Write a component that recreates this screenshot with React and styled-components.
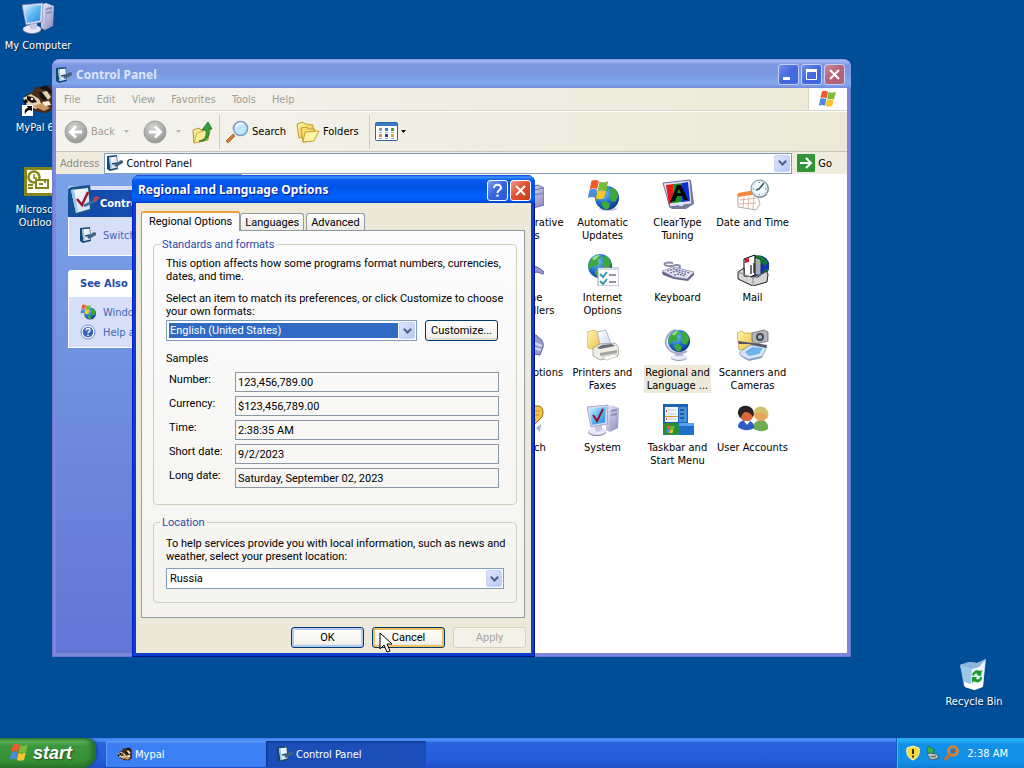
import React, { useState } from 'react';
import styled, { createGlobalStyle, css } from 'styled-components';

const GlobalStyle = createGlobalStyle`
    * {
        box-sizing: border-box;
    }

    body {
        margin: 0;
        overflow: hidden;
        font-family: 'DejaVu Sans Condensed', Roboto, sans-serif;
        font-size: 11px;
        line-height: 13px;
        color: #000;
    }

    button, input, select {
        font: inherit;
        color: inherit;
        margin: 0;
    }

    svg {
        display: block;
        flex: none;
    }
`;

/* ---------- desktop ---------- */

const Screen = styled.div`
    min-height: 100vh;
    display: grid;
    grid-template-rows: 1fr auto;
    background: #004e98;
`;

const Desktop = styled.main`
    position: relative;
    padding: 2px 0;
`;

const ShortcutList = styled.div`
    display: flex;
    flex-direction: column;
    align-items: flex-start;
    gap: 12px;
`;

const Shortcut = styled.button`
    display: flex;
    flex-direction: column;
    align-items: center;
    gap: 5px;
    width: 76px;
    min-height: 70px;
    padding: 0;
    border: 0;
    background: none;
    color: #fff;
    text-shadow: 1px 1px 1px #00264d;
`;

const BinSlot = styled.div`
    position: absolute;
    right: 12px;
    bottom: 10px;
`;

/* ---------- window chrome ---------- */

const Window = styled.section`
    display: flex;
    flex-direction: column;
    position: absolute;
    border-radius: 8px 8px 0 0;
    padding: 0 4px 4px;
    background: ${props => props.$active ? '#0a3fd0' : '#7b88dc'};
    box-shadow: inset 1px 0 ${props => props.$active ? '#0019cf' : '#6a76cf'},
        inset -1px -1px ${props => props.$active ? '#00138c' : '#6a76cf'};
`;

const ExplorerWindow = styled(Window)`
    left: 52px;
    right: 173px;
    top: 59px;
    bottom: 81px;
`;

const DialogWindow = styled(Window)`
    left: 132px;
    top: 175px;
    width: 403px;
`;

const TitleBar = styled.header`
    display: flex;
    align-items: center;
    gap: 2px;
    height: ${props => props.$active ? '28px' : '29px'};
    margin: 0 -4px;
    padding: 2px ${props => props.$active ? '4px' : '6px'} 0 4px;
    border-radius: 8px 8px 0 0;
    background: ${props => props.$active
        ? 'linear-gradient(#0a3ccb 0, #3d95ff 2px, #0a5bf0 5px, #0053e5 12px, #0062ff 22px, #0055ea 26px, #003dc8 28px)'
        : 'linear-gradient(#8a97e6 0, #a7b6f4 2px, #7b97e0 6px, #7a97df 14px, #82a9ee 24px, #7b9ae4 27px, #7a88d9 29px)'};
`;

const Title = styled.h1`
    flex: 1;
    margin: 0 2px;
    font-family: 'Noto Sans', 'Open Sans', sans-serif;
    font-size: 12px;
    line-height: 16px;
    font-weight: 700;
    color: ${props => props.$active ? '#fff' : '#dbe4fb'};
    text-shadow: ${props => props.$active ? '1px 1px #0a1883' : 'none'};
`;

const captionColors = {
    blue: 'linear-gradient(135deg, #7f9ff0, #3563dc 50%, #2c58d4)',
    dim: 'linear-gradient(135deg, #6f90e8, #4468de 50%, #3f68e6)',
    red: 'linear-gradient(135deg, #f0a08a, #df5433 45%, #c23a16)',
    dimRed: 'linear-gradient(135deg, #c88a9c, #b5637a 50%, #ad5f72)',
};

const CaptionButton = styled.button`
    display: grid;
    place-items: center;
    width: 21px;
    height: 21px;
    padding: 0;
    border: 1px solid ${props => props.$tone.startsWith('dim') ? '#c5d0f5' : '#fff'};
    border-radius: 3px;
    background: ${props => captionColors[props.$tone]};
`;

/* ---------- explorer ---------- */

const MenuBar = styled.nav`
    display: flex;
    justify-content: space-between;
    height: 23px;
    border-bottom: 1px solid #d8d4c4;
    background: linear-gradient(90deg, #f4f3ee, #ece9d8);
`;

const MenuItems = styled.div`
    display: flex;
    align-items: center;
    gap: 16px;
    padding-left: 8px;
`;

const MenuButton = styled.button`
    padding: 0;
    border: 0;
    background: none;
    color: #a19e92;
`;

const Throbber = styled.div`
    display: grid;
    place-items: center;
    width: 39px;
    background: #fff;
    border-left: 1px solid #d8d4c4;
`;

const ToolBar = styled.div`
    display: flex;
    align-items: center;
    gap: 5px;
    height: 41px;
    padding: 0 8px;
    border-top: 1px solid #fff;
    border-bottom: 1px solid #cbc7b8;
    background: linear-gradient(90deg, #f4f3ee, #ece9d8);
`;

const ToolButton = styled.button`
    display: flex;
    align-items: center;
    gap: 3px;
    margin-right: ${props => props.$spaced ? '5px' : '0'};
    padding: 0;
    border: 0;
    background: none;
    color: #000;
`;

const NavButton = styled(ToolButton)`
    gap: 9px;
    margin-right: ${props => props.$last ? '4px' : '9px'};
`;

const NavFace = styled.span`
    display: flex;
    align-items: center;
    gap: 3px;
    color: #a19e92;
`;

const Separator = styled.span`
    width: 1px;
    height: 34px;
    background: #cfcbbb;
`;

const AddressBar = styled.div`
    display: flex;
    align-items: center;
    gap: 5px;
    height: 22px;
    padding: 0 15px 0 4px;
    color: #8d8a7e;
    background: #efecdf;
`;

const AddressBox = styled.div`
    flex: 1;
    display: flex;
    align-items: center;
    gap: 3px;
    height: 21px;
    padding: 0 1px 0 2px;
    border: 1px solid #7f9db9;
    background: #fff;
`;

const AddressInput = styled.input`
    flex: 1;
    min-width: 0;
    padding: 0;
    border: 0;
    outline: 0;
    background: none;
    color: #000;
`;

const ExplorerBody = styled.div`
    flex: 1;
    display: flex;
    min-height: 0;
    overflow: hidden;
    background: #fff;
`;

const Sidebar = styled.aside`
    display: flex;
    flex-direction: column;
    gap: 14px;
    width: 186px;
    padding: 12px;
    background: linear-gradient(#7ba2e7, #6375d6);
`;

const TaskPanel = styled.section`
    border: 1px solid #fff;
    border-top: 0;
    border-radius: 4px 4px 0 0;
    background: #d6dff7;
`;

const TaskHeader = styled.h2`
    display: flex;
    align-items: center;
    height: 27px;
    margin: ${props => props.$primary ? '4px -1px 0' : '0 -1px'};
    padding: 0 ${props => props.$primary ? '0' : '12px'};
    border-radius: 4px 4px 0 0;
    font-size: 11px;
    line-height: 13px;
    white-space: nowrap;
    color: ${props => props.$primary ? '#fff' : '#1f4ba5'};
    background: ${props => props.$primary ? 'linear-gradient(90deg, #0f48a8, #2156c0)' : '#fff'};

    svg {
        margin-top: -5px;
    }
`;

const TaskLinks = styled.div`
    display: flex;
    flex-direction: column;
    gap: 4px;
    padding: ${props => props.$tall ? '10px 11px 12px' : '7px 11px'};
`;

const TaskLink = styled.a`
    display: flex;
    align-items: center;
    gap: 7px;
    color: #4366b8;
    text-decoration: none;
    white-space: nowrap;
`;

const IconGrid = styled.div`
    flex: 1;
    display: grid;
    grid-template-columns: repeat(7, 75px);
    grid-auto-rows: 75px;
    align-content: start;
    padding: 5px 0 0 23px;
`;

const Applet = styled.button`
    display: flex;
    flex-direction: column;
    align-items: center;
    gap: 4px;
    padding: 0;
    border: 0;
    background: none;

    &:nth-child(4n + 1) {
        grid-column-start: 4;
    }
`;

const AppletName = styled.span`
    padding: 1px;
    white-space: pre-line;
    background: ${props => props.$selected ? '#ece9d8' : 'none'};
`;

/* ---------- dialog ---------- */

const DialogBody = styled.div`
    padding: 8px 6px 5px 5px;
    font-family: Roboto, 'Liberation Sans', Arial, sans-serif;
    background: #ece9d8;
`;

const TabList = styled.div`
    display: flex;
    align-items: flex-end;
    gap: 2px;
    height: 19px;
`;

const Tab = styled.button`
    height: 17px;
    padding: 0 4px;
    border: 1px solid #919b9c;
    border-bottom: 0;
    border-radius: 3px 3px 0 0;
    background: linear-gradient(#fff, #ecebe6);

    ${props => props.$current && css`
        z-index: 1;
        height: 20px;
        margin: 0 -2px -1px 0;
        padding: 0 7px 2px;
        border-top: 2px solid #e9a23b;
        background: #fcfcfe;
    `}
`;

const TabPage = styled.div`
    padding: 7px 7px 14px 11px;
    border: 1px solid #919b9c;
    background: linear-gradient(#fcfcfe, #f4f3ee);
`;

const Group = styled.fieldset`
    min-width: 0;
    margin: 0;
    padding: ${props => props.$tall ? '6px 12px 16px' : '8px 12px 13px'};
    border: 1px solid #d0d0bf;
    border-radius: 4px;

    & + & {
        margin-top: 11px;
    }
`;

const Legend = styled.legend`
    margin-left: -6px;
    padding: 0 2px;
    color: #1f4aa8;
`;

const Note = styled.p`
    margin: 0 0 ${props => props.$gap}px;
    white-space: nowrap;
`;

const FormatRow = styled.div`
    display: flex;
    align-items: center;
    gap: 8px;
    margin-bottom: 11px;
    padding-right: 6px;
`;

const ComboBox = styled.span`
    flex: 1;
    display: flex;
    height: 21px;
    padding: 1px;
    border: 1px solid #7f9db9;
    background: #fff;
`;

const ComboSelect = styled.select`
    flex: 1;
    min-width: 0;
    margin: 1px;
    padding: 0 1px;
    border: 0;
    border-radius: 0;
    outline: 0;
    appearance: none;
    color: ${props => props.$focused ? '#fff' : '#000'};
    background: ${props => props.$focused ? '#316ac5' : '#fff'};
`;

const ArrowBox = styled.span`
    display: grid;
    place-items: center;
    width: 16px;
    height: 17px;
    border: 1px solid #c6d3f7;
    border-radius: 2px;
    background: linear-gradient(135deg, #dde6fe, #b6c9f6);
`;

const PushButton = styled.button`
    position: relative;
    width: 73px;
    height: 21px;
    padding: 0;
    border: 1px solid #003c74;
    border-radius: 3px;
    background: linear-gradient(#fff, #f3f2ec 80%, #dcd8cd);

    ${props => props.$look === 'default' && css`
        box-shadow: inset 0 0 0 2px #b3caf2;
    `}

    ${props => props.$look === 'hot' && css`
        box-shadow: inset 0 0 0 2px #f3bf5c;
    `}

    &:disabled {
        color: #a7a597;
        border-color: #d5d2c2;
        background: #f3f1e8;
    }
`;

const SampleGrid = styled.div`
    display: grid;
    grid-template-columns: 66px 1fr;
    gap: 4px 0;
    padding: 0 5px 0 3px;
`;

const SampleLabel = styled.label`
    padding-top: 1px;
`;

const SampleField = styled.input`
    width: 100%;
    height: 20px;
    padding: 0 2px;
    border: 1px solid #8a97a3;
    border-radius: 0;
    outline: 0;
    background: none;
`;

const Buttons = styled.footer`
    display: flex;
    justify-content: flex-end;
    gap: 8px;
    padding-top: 9px;
    margin-right: -1px;
`;

const Pointer = styled.svg`
    position: absolute;
    left: 6px;
    top: 4px;
    pointer-events: none;
`;

/* ---------- taskbar ---------- */

const TaskBar = styled.footer`
    display: flex;
    height: 30px;
    background: linear-gradient(#3b7bea 0, #4f93f8 2px, #2a62dc 5px, #245bdb 24px, #1f4fc4 30px);
`;

const StartButton = styled.button`
    display: flex;
    align-items: center;
    gap: 4px;
    width: 96px;
    margin-right: 10px;
    padding: 0 0 1px 10px;
    border: 0;
    border-radius: 0 10px 14px 0;
    background: linear-gradient(#2f7d30 0, #62b35f 3px, #3c963c 8px, #379237 22px, #2b7a2c 30px);
    box-shadow: inset -4px 0 5px #246d26, 1px 0 3px #143c9c;
    font: italic 700 18px/22px 'Liberation Sans', Arial, sans-serif;
    color: #fff;
    text-shadow: 1px 1px 2px #1d4d1e;
`;

const TaskButton = styled.button`
    display: flex;
    align-items: center;
    gap: 3px;
    width: 160px;
    height: 26px;
    margin-top: 3px;
    padding: 0 11px;
    border: 0;
    border-radius: 2px;
    color: #fff;
    background: ${props => props.$pressed ? '#1b4eb8' : 'linear-gradient(#4f8df8, #3a7ff2 4px, #3b80f4)'};
    box-shadow: ${props => props.$pressed ? 'inset 1px 1px 2px #0f3487' : 'inset 1px 1px #5f9bfb'};
`;

const Tray = styled.div`
    display: flex;
    align-items: center;
    gap: 3px;
    width: 128px;
    margin-left: auto;
    padding: 0 8px;
    border-left: 1px solid #0f5fb8;
    color: #fff;
    background: linear-gradient(#1fa0f0 0, #28b4f8 2px, #1290e8 6px, #1290e8 24px, #0e7cd0 30px);
    box-shadow: inset 1px 0 #3ec0fb;
`;

const Clock = styled.time`
    margin-left: auto;
    padding-right: 8px;
    white-space: nowrap;
`;

/* ---------- drawings ---------- */

const HiddenSvg = styled.svg`
    position: absolute;
`;

const Gradients = () => (
    <HiddenSvg width="0" height="0" aria-hidden="true">
        <defs>
            <linearGradient id="glass" x1="0" y1="0" x2="1" y2="1">
                <stop offset="0" stopColor="#d8f4ff" />
                <stop offset="0.5" stopColor="#5db8f2" />
                <stop offset="1" stopColor="#2b8be0" />
            </linearGradient>
            <linearGradient id="plastic" x1="0" y1="0" x2="1" y2="1">
                <stop offset="0" stopColor="#f3f2ff" />
                <stop offset="1" stopColor="#8684b8" />
            </linearGradient>
            <radialGradient id="sea" cx="0.35" cy="0.3" r="0.8">
                <stop offset="0" stopColor="#7fd0ff" />
                <stop offset="0.5" stopColor="#1f6fd2" />
                <stop offset="1" stopColor="#0a2f80" />
            </radialGradient>
            <linearGradient id="paper" x1="0" y1="0" x2="1" y2="1">
                <stop offset="0" stopColor="#fff" />
                <stop offset="1" stopColor="#cdd8ee" />
            </linearGradient>
            <linearGradient id="folder" x1="0" y1="0" x2="1" y2="1">
                <stop offset="0" stopColor="#fff6b0" />
                <stop offset="1" stopColor="#e9bd3c" />
            </linearGradient>
            <radialGradient id="disc" cx="0.4" cy="0.3" r="0.8">
                <stop offset="0" stopColor="#d4d4d2" />
                <stop offset="1" stopColor="#8f8f8e" />
            </radialGradient>
        </defs>
    </HiddenSvg>
);

const Icon = ({ size = 32, box = 32, children }) => (
    <svg width={size} height={size} viewBox={`0 0 ${box} ${box}`} aria-hidden="true">
        {children}
    </svg>
);

const Flag = () => (
    <g>
        <path d="M5 3c4-2.500 7-2 11 0l-2.500 12c-4-2-7-2-11 0z" fill="#f0592b" />
        <path d="M17 3.500c4 2 8 2 13-.5l-3 12c-4 2.500-8 2.500-12.500.5z" fill="#7cbb3a" />
        <path d="M2.200 16c4-2 7-2 11 0l-2.500 12c-4-2-7-2-11 0z" fill="#4a8be0" />
        <path d="M14.200 16.500c4 2 8 2 12.500-.5l-3 12c-4 2.500-8 2-12 .5z" fill="#fbc52c" />
    </g>
);

const FlagIcon = ({ size }) => <Icon size={size}><Flag /></Icon>;

const Globe = ({ x = 16, y = 16, r = 12 }) => (
    <g transform={`translate(${x} ${y}) scale(${r / 12})`}>
        <circle r="12" fill="url(#sea)" />
        <path d="M-10-5c2-4 6-6 9-6l2 3-3 2 1 4-4 3-3-1-2 4-2-4zM2-9l4-1c4 2 5 6 5 9l-3 5-4-1-2-5 2-3zM-5 4l4-1 4 3-1 4-3 2-4-4z" fill="#3fa83a" />
        <path d="M-8-7c2-3 5-4 8-4l-5 5z" fill="#a5e08a" />
    </g>
);

const Computer = ({ check }) => (
    <g>
        <path d="M19 3l5-2 8 3-1 20-8 4-4-2z" fill="url(#plastic)" />
        <path d="M24 6l6-1v2l-6 1zM24 10l6-1v2l-6 1z" fill="#8c8ab8" />
        <path d="M24 6v20" stroke="#a6a4d0" fill="none" />
        <ellipse cx="10" cy="28" rx="9" ry="4" fill="#77769e" />
        <ellipse cx="10" cy="27" rx="9" ry="4" fill="#e9e8f8" />
        <path d="M8 20h7v6c-2 2-5 2-7 1z" fill="#c9c7e6" />
        <path d="M0 3l21-2-1 19-16 3z" fill="#d9dcf2" stroke="#8a88b6" strokeWidth="0.7" />
        <path d="M2 4.500l17-1.500-1 15.500-13 2.500z" fill="url(#glass)" />
        {check && <path d="M6 11l4 6 6-12" stroke="#8e1230" strokeWidth="2" fill="none" />}
    </g>
);

const ComputerIcon = () => <Icon><Computer /></Icon>;
const SystemIcon = () => <Icon><Computer check /></Icon>;

const Raccoon = () => (
    <g>
        <path d="M3 12l7-4 5-6 6 3 6-4 5 6v17l-7 5-9-1-9-4-4-7z" fill="#4a2d1a" />
        <path d="M1 14l8-4 8 5 3 6-6 4-9-4z" fill="#e8cfae" />
        <path d="M5 12l6 1 4 5-5 1-5-3zM17 8l6 1 3 6-4 2-4-4z" fill="#1a1410" />
        <path d="M17 4l7-3 6 6-3 4-4-5z" fill="#1a1410" />
        <path d="M20 8l5-1 4 6-3 3z" fill="#e8cfae" />
        <path d="M11 22l10-3 7 5-6 3z" fill="#c89a62" />
        <path d="M20 18l7-1 2 4-6 1z" fill="#fff1d8" />
        <circle cx="10" cy="15" r="1.200" fill="#fff" />
        <path d="M1 17l3-2 2 3-3 2z" fill="#000" />
    </g>
);

const MyPalIcon = () => (
    <Icon>
        <Raccoon />
        <path d="M0 21h11v11H0z" fill="#fff" />
        <path d="M3 30c-1-4 1-6 3-6l-1-2h5v5l-2-1c-2 0-4 2-5 4z" fill="#000" />
    </Icon>
);

const OutlookIcon = () => (
    <Icon>
        <path d="M2 1h30v29H2z" fill="#85861a" />
        <path d="M5 4h25v23H5z" fill="#fff" />
        <circle cx="12" cy="11" r="5.500" fill="#fff" stroke="#85861a" strokeWidth="2.500" />
        <path d="M12 8v4h3" fill="none" stroke="#85861a" strokeWidth="1.500" />
        <path d="M14 14h12v8H14z" fill="#fff" stroke="#85861a" strokeWidth="2" />
        <path d="M17 18h4M22 16h2M6 19h5M6 22h5" stroke="#85861a" strokeWidth="2" />
    </Icon>
);

const RecycleIcon = () => (
    <Icon>
        <path d="M2 7l9-3 8 1 9-4-3 28-8 3-10-3z" fill="#b5d4ef" />
        <path d="M3 8l11 3 13-9-2 26-10 3-9-3z" fill="#eaf5ff" />
        <path d="M2 7l12 4-1 15-8-2z" fill="#7fb0e0" opacity="0.700" />
        <path d="M2 7l9-3 8 1 9-4-7 8-7 2z" fill="#8cb6dc" />
        <path d="M6 24l8 3 11-2-1 4-8 3-9-3z" fill="#fff" />
        <path d="M14 17c1-4 5-6 8-4l2-1-1 6-5-1 2-1c-2-1-4 0-4 2zM24 19c0 5-5 7-8 4l-2 2v-6h5l-1 2c2 1 4 0 4-2z" fill="#1d9a26" />
    </Icon>
);

/* clipboard sheet with a pen, used wherever the control panel shows up */
const PanelIcon = ({ size = 16 }) => (
    <Icon size={size} box={16}>
        <path d="M0 1l10-1 1 14-8 2-3-2z" fill="#16476f" />
        <path d="M2 2.500l7.500-1 1 11-7 1.800z" fill="url(#paper)" />
        <path d="M2 2.500l1.500-.3L5 14l-1.500.3z" fill="#8fc0ea" />
        <path d="M7 10l7-5 2 1v2L9 12z" fill="#46607e" />
        <path d="M5 9l5-1" fill="none" stroke="#2a4d78" strokeWidth="1.500" />
    </Icon>
);

const PanelLargeIcon = () => (
    <Icon>
        <path d="M0 4l3-2 19-2 3 25-17 6-6-2z" fill="#16528d" />
        <path d="M3 5l17-2 2 21-14 4z" fill="url(#paper)" />
        <path d="M3 5l3-1 4 23-2 1z" fill="#9cc6ee" />
        <path d="M9 14l5 6 6-13" stroke="#9d1730" strokeWidth="2.500" fill="none" />
        <path d="M15 20l12-6 2 2-12 6z" fill="#3b6ea8" />
        <path d="M25 13l4-2 3 1-3 4-3 1z" fill="#b83f5a" />
    </Icon>
);

const UpdateIcon = ({ size }) => (
    <Icon size={size}>
        <ellipse cx="21" cy="30" rx="9" ry="2" fill="#c9cddb" />
        <Globe x={20} y={19} r={12} />
        <g transform="translate(1 0) scale(0.680)"><Flag /></g>
    </Icon>
);

const HelpIcon = () => (
    <Icon size={16} box={16}>
        <circle cx="8" cy="8" r="7" fill="#fff" stroke="#6d89c8" />
        <circle cx="8" cy="8" r="5.300" fill="#3763be" />
        <path d="M6 6.500c0-3 4.500-2.500 4 0-.3 1.200-2 1-2 2.700M8 10.500v1.500" stroke="#fff" strokeWidth="1.400" fill="none" />
    </Icon>
);

const ClearTypeIcon = () => (
    <Icon>
        <path d="M2 4l27-3 3 24-8 5H10L7 28z" fill="#777ba0" />
        <path d="M1 4l27-3 2 24-22 3z" fill="#dddff0" stroke="#6d7096" />
        <path d="M4 6l8-1-2 19-3 1z" fill="#e01818" />
        <path d="M12 5l9-1v19l-11 1z" fill="#148c28" />
        <path d="M20 4l6-1 2 19-8 1z" fill="#1230d2" />
        <path d="M8 23L15 6h4l7 15h-4l-2-4h-5l-2 5zM15 14h4l-2-4z" fill="#000" />
        <path d="M17 23h4v4h-4z" fill="#cfe9ff" />
    </Icon>
);

const DateIcon = () => (
    <Icon>
        <path d="M1 15l18-3 4 13-4 6-18-3z" fill="#fff" stroke="#9c9488" strokeWidth="0.800" />
        <path d="M1 14l18-3 1 4-19 3z" fill="#f5863a" />
        <path d="M3 21l16-2M2 25l17-1M7 18l-1 11M12 17l-1 13M17 17l-1 13" stroke="#e0b7a0" fill="none" />
        <circle cx="23" cy="10" r="9" fill="#7f909c" />
        <circle cx="22.500" cy="9.500" r="8.500" fill="#dfeef2" stroke="#7f929c" />
        <circle cx="22.500" cy="9.500" r="6" fill="#f6fbfc" />
        <path d="M27 4l-5 6-3 1" stroke="#275c74" strokeWidth="1.500" fill="none" />
        <path d="M22.500 3v1M29 10h-1M22.500 16v-1M16 10h1" stroke="#607c88" />
    </Icon>
);

const InternetIcon = () => (
    <Icon>
        <Globe x={13} y={12} r={12} />
        <path d="M11 14h21v18H11z" fill="#fff" stroke="#9aa3b8" />
        <path d="M11 14h21v2H11z" fill="#d4dcec" />
        <path d="M13 20l3 3 4-5M13 27l3 3 4-5" stroke="#2f9aa8" strokeWidth="2" fill="none" />
        <path d="M22 21h7M22 28h7" stroke="#6c7486" strokeWidth="1.500" />
    </Icon>
);

const KeyboardIcon = () => (
    <Icon>
        <path d="M15 15c4-1 4-4 0-4-4 1-9 2-12 0-2-2 2-3 8-2" stroke="#8b8ba6" strokeWidth="2" fill="none" />
        <path d="M0 18l11-5 21 5v3l-6 6-14-2-11-4z" fill="#66668c" />
        <path d="M0 17l11-4 21 5-7 7-13-2z" fill="#e5e5f2" stroke="#8e8eae" strokeWidth="0.700" />
        <path d="M5 17l7-2 16 4M8 19l6-2 11 4M12 21l4-1 7 2" stroke="#6868a0" strokeWidth="1.300" strokeDasharray="2 1" fill="none" />
    </Icon>
);

const MailIcon = () => (
    <Icon>
        <circle cx="22" cy="12" r="10.500" fill="#1430b4" />
        <path d="M16 2c5-2 12 1 15 6l-3 4-3-3-2 3-4-2zM26 17l6-3-3 7-4 2z" fill="#117b34" />
        <path d="M7 5l11-4v20L7 25z" fill="#fff" stroke="#000" />
        <path d="M8 5l4-1v4L8 9z" fill="#d01c30" />
        <path d="M14 11v9M17 9v10M20 4v14M22 7v12" stroke="#222" strokeWidth="1.300" />
        <path d="M18 3l6 3v15h-6z" fill="#fff" opacity="0.600" stroke="#222" />
        <path d="M1 18l6-4v8l14 1 8-6 2 3-1 8-14 4L1 25z" fill="#d5d5d5" stroke="#222" />
        <path d="M1 18l15 6 14-6M16 24v8" stroke="#8b8b8b" fill="none" />
    </Icon>
);

const PrinterIcon = () => (
    <Icon>
        <path d="M0 3l8-2 2 2h7v14l-14 3-3-2z" fill="url(#folder)" stroke="#c9a03c" strokeWidth="0.600" />
        <path d="M10 3l9-2 5 14-10 4z" fill="url(#paper)" stroke="#8fa0c0" strokeWidth="0.700" />
        <path d="M6 19l7-4 15-1 4 5-1 8-18 4-7-4z" fill="#eeede8" stroke="#8b8b86" strokeWidth="0.700" />
        <path d="M10 19l5-3 10-1 3 2-15 3z" fill="#6a6c76" />
        <path d="M13 24l17-3v3l-17 3z" fill="#a7a69e" />
        <path d="M15 28l14-3 2 2-11 4z" fill="#fff" stroke="#9a9a94" strokeWidth="0.500" />
    </Icon>
);

const RegionalIcon = () => (
    <Icon>
        <ellipse cx="17" cy="29" rx="8" ry="3" fill="#9a9ac0" />
        <ellipse cx="17" cy="28" rx="8" ry="3" fill="#eaeaf8" />
        <path d="M14 22h6l1 5h-8z" fill="#b5b5d8" />
        <path d="M14 1c-9 2-13 12-8 18 4 6 13 7 19 3" stroke="#a8a8c8" strokeWidth="2" fill="none" />
        <Globe x={17} y={12} r={11} />
    </Icon>
);

const ScannerIcon = () => (
    <Icon>
        <path d="M0 4l5-2 2 2h9v15l-14 2z" fill="url(#folder)" stroke="#b88e28" strokeWidth="0.600" />
        <path d="M15 4l12-3 4 2v9l-12 3-4-3z" fill="#b5b5ba" stroke="#55555c" strokeWidth="0.700" />
        <circle cx="23" cy="8" r="4" fill="#47474f" />
        <circle cx="23" cy="8" r="2" fill="#a4c3d8" />
        <path d="M3 23l10-7 17 2-5 10-13 3-9-5z" fill="#d9e4f4" stroke="#7084a8" strokeWidth="0.700" />
        <path d="M8 23l7-5 11 1-4 6-10 2z" fill="#6fb4ea" />
        <path d="M1 12l29 4-1 3L12 15 2 15z" fill="#53556a" />
        <path d="M3 27l9 3 13-3v2l-13 3z" fill="#8ba0c4" />
    </Icon>
);

const TaskbarIcon = () => (
    <Icon>
        <path d="M1 0h25v20H1z" fill="#1b62b4" />
        <path d="M3 3h13v15H3z" fill="#f5f8ff" />
        <path d="M17 3h8v15h-8z" fill="#3f90dd" />
        <path d="M6 6h8M6 10h8M6 15h8" stroke="#b8c4d8" />
        <path d="M3 12.500h13" stroke="#f08838" />
        <path d="M4 6h1v2H4zM4 14h1v2H4z" fill="#e04828" />
        <path d="M18 6h4M18 10h4M18 14h4" stroke="#1d5da4" strokeWidth="2" />
        <path d="M1 19h31v12H1z" fill="#1d6fca" />
        <path d="M17 19h15v3H17z" fill="#54a4ee" />
        <path d="M1 19h14c3 4 3 9 1 12H1z" fill="#2b8f35" />
        <g transform="translate(4 21) scale(0.280)"><Flag /></g>
    </Icon>
);

const UsersIcon = () => (
    <Icon>
        <path d="M16 24c0-5 4-8 8-8s8 4 7 9c-4 3-11 3-15-1z" fill="#6dac4f" />
        <circle cx="24" cy="10" r="7" fill="#e8a65c" />
        <path d="M17 9c0-8 11-9 14-1 1 3 0 6-1 7 0-6-5-7-9-6z" fill="#d6c06c" />
        <path d="M1 23c0-5 4-7 8-7s9 3 8 8c-4 3-12 3-16-1z" fill="#315cc2" />
        <circle cx="9.500" cy="10.500" r="7" fill="#d7683a" />
        <path d="M1 10C0 1 12-1 16 6c1 2 1 5 0 7-2-4-5-5-8-5-3 1-3 5-5 6z" fill="#2a2222" />
        <path d="M7 17l3 4 3-4z" fill="#fff" />
    </Icon>
);

const ToolsIcon = () => (
    <Icon>
        <path d="M6 12l20-6 6 3v17l-18 5-8-4z" fill="url(#plastic)" stroke="#6664a0" />
        <path d="M22 11l9-2M22 16l9-2" stroke="#7674b0" />
    </Icon>
);

const GameIcon = () => (
    <Icon>
        <path d="M8 16c6-6 16-6 24 2 0 3-2 2-4 1-5-3-9 3-14 3-4 0-7-3-6-6z" fill="#9a98d4" stroke="#5e5c9c" />
    </Icon>
);

const PowerIcon = () => (
    <Icon>
        <path d="M12 10c4-6 12-6 14-2 4 2 6 6 5 10l-3 8-6-1z" fill="#9a98cc" stroke="#605e98" />
        <path d="M22 14l8 3M22 19l7 2" stroke="#dcdbf4" strokeWidth="2" />
    </Icon>
);

const SpeechIcon = () => (
    <Icon>
        <path d="M4 2h22c6 0 7 10 1 14l-5 5 1-6H4z" fill="#f5c544" stroke="#8a6718" />
        <path d="M12 7h16M12 11h15" stroke="#c28e20" />
        <path d="M24 24l5-4-1 8z" fill="#a9aef0" />
    </Icon>
);

const ArrowDisc = ({ flip }) => (
    <svg width="24" height="24" viewBox="0 0 24 24" aria-hidden="true">
        <circle cx="12" cy="12" r="11" fill="url(#disc)" stroke="#a2a2a0" />
        <path
            d="M18 12H7M12 6.500L6.500 12l5.500 5.500"
            stroke="#fff"
            strokeWidth="3"
            fill="none"
            transform={flip ? 'rotate(180 12 12)' : undefined}
        />
    </svg>
);

const Caret = ({ color = '#000' }) => (
    <svg width="5" height="3" viewBox="0 0 5 3" aria-hidden="true">
        <path d="M0 0h5L2.500 3z" fill={color} />
    </svg>
);

const UpIcon = () => (
    <Icon size={24} box={24}>
        <path d="M3 10l6-2 2 2 9-2-2 12-14 3z" fill="url(#folder)" stroke="#b6932c" />
        <path d="M7 13l14-4-4 11-13 3z" fill="#fbee98" stroke="#c3a13a" strokeWidth="0.700" />
        <path d="M9 21c6-1 8-5 7-11h-4l6-8 4 7h-3c1 8-3 13-10 12z" fill="#2fa43a" stroke="#166e20" strokeWidth="0.800" />
    </Icon>
);

const SearchIcon = () => (
    <Icon size={24} box={24}>
        <path d="M8 14l2 2-7 7-2-2z" fill="#d7793a" stroke="#94511f" strokeWidth="0.700" />
        <circle cx="15.500" cy="8.500" r="7" fill="#bfe6fb" stroke="#7e9cc2" strokeWidth="1.600" />
        <path d="M11 7c1-3 4-4 7-3" stroke="#fff" strokeWidth="2" fill="none" />
    </Icon>
);

const FoldersIcon = () => (
    <Icon size={24} box={24}>
        <path d="M1 4l6-2 2 2 8 1v10L3 18z" fill="url(#folder)" stroke="#c6a02f" />
        <path d="M5 8l6-1 1 2h7l-3 12-9 1z" fill="#f8df71" stroke="#c6a02f" />
        <path d="M9 12l14-1-5 10-11 1z" fill="#fff3a6" stroke="#c6a02f" />
    </Icon>
);

const viewDots = ['#8a9ab4', '#3a7fd8', '#3aa03a', '#e9863c', '#1f3d9c', '#e0a43c'];

const ViewsIcon = () => (
    <svg width="23" height="19" viewBox="0 0 23 19" aria-hidden="true">
        <rect x="0.500" y="0.500" width="22" height="18" rx="1" fill="#fff" stroke="#2a62a8" />
        <path d="M1 1h21v3H1z" fill="#3b7ac6" />
        {viewDots.map((color, i) => (
            <g key={i} transform={`translate(${4 + (i % 3) * 6} ${6 + Math.floor(i / 3) * 6})`}>
                <path d="M0 0h3v3H0z" fill={color} />
                <path d="M0 4.500h3" stroke="#8b98ae" strokeWidth="0.800" />
            </g>
        ))}
    </svg>
);

const GoIcon = () => (
    <Icon size={18} box={18}>
        <rect width="18" height="18" rx="1" fill="#2f9638" />
        <path d="M3 9h11M9 4l5 5-5 5" stroke="#fff" strokeWidth="2" fill="none" />
    </Icon>
);

const Chevron = () => (
    <svg width="9" height="6" viewBox="0 0 9 6" aria-hidden="true">
        <path d="M.8.8l3.700 3.700L8.200.8" stroke="#4d6185" strokeWidth="2" fill="none" />
    </svg>
);

const ShieldIcon = () => (
    <Icon size={16} box={16}>
        <path d="M8 1l6 2c1 6-1 10-6 12C3 13 1 9 2 3z" fill="#f8d936" stroke="#fff7c0" />
        <path d="M8 4v5M8 10.500v2" stroke="#3a3000" strokeWidth="2" />
    </Icon>
);

const EjectIcon = () => (
    <Icon size={16} box={16}>
        <path d="M3 6l1-5 7 4-2 1 1 3H5z" fill="#3fae48" stroke="#1c6f26" strokeWidth="0.700" />
        <path d="M3 9l3-1 7 1 2 4-8 2z" fill="#b8c2c4" stroke="#3e4a50" strokeWidth="0.800" />
        <path d="M7 12l5-1" stroke="#2a6a38" />
    </Icon>
);

const FinderIcon = () => (
    <Icon size={16} box={16}>
        <circle cx="10" cy="6" r="4.500" fill="none" stroke="#e88428" strokeWidth="2.500" />
        <circle cx="10" cy="6" r="2" fill="#8f5a44" />
        <path d="M7 9l-5 6" stroke="#d56a1c" strokeWidth="3" />
    </Icon>
);

const CloseGlyph = () => (
    <svg width="13" height="13" viewBox="0 0 13 13" aria-hidden="true">
        <path d="M2 2l9 9M11 2l-9 9" stroke="#fff" strokeWidth="2" />
    </svg>
);

const MinGlyph = () => (
    <svg width="13" height="13" viewBox="0 0 13 13" aria-hidden="true">
        <path d="M1 10.500h7" stroke="#fff" strokeWidth="3" />
    </svg>
);

const MaxGlyph = () => (
    <svg width="13" height="13" viewBox="0 0 13 13" aria-hidden="true">
        <path d="M1.500 2v9.500h10V2" stroke="#fff" fill="none" />
        <path d="M1 2.500h11" stroke="#fff" strokeWidth="3" />
    </svg>
);

const HelpGlyph = () => (
    <svg width="13" height="15" viewBox="0 0 13 15" aria-hidden="true">
        <path d="M3 5c0-4.500 7.500-4 7 0-.4 2-3.500 2.300-3.500 5M6.500 11.500v2.200" stroke="#fff" strokeWidth="2" fill="none" />
    </svg>
);

/* ---------- content ---------- */

const menus = ['File', 'Edit', 'View', 'Favorites', 'Tools', 'Help'];

const applets = [
    { name: 'Administrative\nTools', icon: ToolsIcon },
    { name: 'Automatic\nUpdates', icon: UpdateIcon },
    { name: 'ClearType\nTuning', icon: ClearTypeIcon },
    { name: 'Date and Time', icon: DateIcon },
    { name: 'Game\nControllers', icon: GameIcon },
    { name: 'Internet\nOptions', icon: InternetIcon },
    { name: 'Keyboard', icon: KeyboardIcon },
    { name: 'Mail', icon: MailIcon },
    { name: 'Power Options', icon: PowerIcon },
    { name: 'Printers and\nFaxes', icon: PrinterIcon },
    { name: 'Regional and\nLanguage ...', icon: RegionalIcon, selected: true },
    { name: 'Scanners and\nCameras', icon: ScannerIcon },
    { name: 'Speech', icon: SpeechIcon },
    { name: 'System', icon: SystemIcon },
    { name: 'Taskbar and\nStart Menu', icon: TaskbarIcon },
    { name: 'User Accounts', icon: UsersIcon },
];

const samples = [
    { id: 'number', label: 'Number:', value: '123,456,789.00' },
    { id: 'currency', label: 'Currency:', value: '$123,456,789.00' },
    { id: 'time', label: 'Time:', value: '2:38:35 AM' },
    { id: 'short-date', label: 'Short date:', value: '9/2/2023' },
    { id: 'long-date', label: 'Long date:', value: 'Saturday, September 02, 2023' },
];

const tabs = ['Regional Options', 'Languages', 'Advanced'];

const Combo = ({ label, value, focused }) => (
    <ComboBox>
        <ComboSelect aria-label={label} defaultValue={value} $focused={focused}>
            <option>{value}</option>
        </ComboSelect>
        <ArrowBox><Chevron /></ArrowBox>
    </ComboBox>
);

const Explorer = () => (
    <ExplorerWindow>
        <TitleBar>
            <PanelIcon />
            <Title>Control Panel</Title>
            <CaptionButton $tone="dim" aria-label="Minimize"><MinGlyph /></CaptionButton>
            <CaptionButton $tone="dim" aria-label="Maximize"><MaxGlyph /></CaptionButton>
            <CaptionButton $tone="dimRed" aria-label="Close"><CloseGlyph /></CaptionButton>
        </TitleBar>
        <MenuBar>
            <MenuItems>
                {menus.map(menu => <MenuButton key={menu}>{menu}</MenuButton>)}
            </MenuItems>
            <Throbber><FlagIcon size={18} /></Throbber>
        </MenuBar>
        <ToolBar>
            <NavButton disabled>
                <NavFace><ArrowDisc />Back</NavFace>
                <Caret color="#b5b2a6" />
            </NavButton>
            <NavButton disabled $last aria-label="Forward">
                <ArrowDisc flip />
                <Caret color="#b5b2a6" />
            </NavButton>
            <ToolButton aria-label="Up"><UpIcon /></ToolButton>
            <Separator />
            <ToolButton $spaced><SearchIcon />Search</ToolButton>
            <ToolButton $spaced><FoldersIcon />Folders</ToolButton>
            <Separator />
            <ToolButton aria-label="Views"><ViewsIcon /><Caret /></ToolButton>
        </ToolBar>
        <AddressBar>
            <label htmlFor="address">Address</label>
            <AddressBox>
                <PanelIcon />
                <AddressInput id="address" defaultValue="Control Panel" />
                <ArrowBox><Chevron /></ArrowBox>
            </AddressBox>
            <ToolButton><GoIcon />Go</ToolButton>
        </AddressBar>
        <ExplorerBody>
            <Sidebar>
                <TaskPanel>
                    <TaskHeader $primary><PanelLargeIcon />Control Panel</TaskHeader>
                    <TaskLinks $tall>
                        <TaskLink href="#category"><PanelIcon />Switch to Category View</TaskLink>
                    </TaskLinks>
                </TaskPanel>
                <TaskPanel>
                    <TaskHeader>See Also</TaskHeader>
                    <TaskLinks>
                        <TaskLink href="#update"><UpdateIcon size={16} />Windows Update</TaskLink>
                        <TaskLink href="#help"><HelpIcon />Help and Support</TaskLink>
                    </TaskLinks>
                </TaskPanel>
            </Sidebar>
            <IconGrid>
                {applets.map(({ name, icon: AppletIcon, selected }) => (
                    <Applet key={name}>
                        <AppletIcon />
                        <AppletName $selected={selected}>{name}</AppletName>
                    </Applet>
                ))}
            </IconGrid>
        </ExplorerBody>
    </ExplorerWindow>
);

const RegionalDialog = () => {
    const [current, setCurrent] = useState(tabs[0]);

    return (
        <DialogWindow $active role="dialog" aria-label="Regional and Language Options">
            <TitleBar $active>
                <Title $active>Regional and Language Options</Title>
                <CaptionButton $tone="blue" aria-label="Help"><HelpGlyph /></CaptionButton>
                <CaptionButton $tone="red" aria-label="Close"><CloseGlyph /></CaptionButton>
            </TitleBar>
            <DialogBody>
                <TabList role="tablist">
                    {tabs.map(tab => (
                        <Tab
                            key={tab}
                            role="tab"
                            aria-selected={tab === current}
                            $current={tab === current}
                            onClick={() => setCurrent(tab)}
                        >
                            {tab}
                        </Tab>
                    ))}
                </TabList>
                <TabPage role="tabpanel">
                    <Group $tall>
                        <Legend>Standards and formats</Legend>
                        <Note $gap={9}>
                            This option affects how some programs format numbers, currencies,<br />
                            dates, and time.
                        </Note>
                        <Note $gap={2}>
                            Select an item to match its preferences, or click Customize to choose<br />
                            your own formats:
                        </Note>
                        <FormatRow>
                            <Combo label="Format" value="English (United States)" focused />
                            <PushButton>Customize...</PushButton>
                        </FormatRow>
                        <Note $gap={7}>Samples</Note>
                        <SampleGrid>
                            {samples.map(({ id, label, value }) => (
                                <React.Fragment key={id}>
                                    <SampleLabel htmlFor={id}>{label}</SampleLabel>
                                    <SampleField id={id} value={value} readOnly />
                                </React.Fragment>
                            ))}
                        </SampleGrid>
                    </Group>
                    <Group>
                        <Legend>Location</Legend>
                        <Note $gap={5}>
                            To help services provide you with local information, such as news and<br />
                            weather, select your present location:
                        </Note>
                        <Combo label="Location" value="Russia" />
                    </Group>
                </TabPage>
                <Buttons>
                    <PushButton $look="default">OK</PushButton>
                    <PushButton $look="hot">
                        Cancel
                        <Pointer width="14" height="22" viewBox="0 0 14 22" aria-hidden="true">
                            <path d="M1 1v16l4-4 3 7 3-1-3-7h5z" fill="#fff" stroke="#000" />
                        </Pointer>
                    </PushButton>
                    <PushButton disabled>Apply</PushButton>
                </Buttons>
            </DialogBody>
        </DialogWindow>
    );
};

const App = () => (
    <Screen>
        <GlobalStyle />
        <Gradients />
        <Desktop>
            <ShortcutList>
                <Shortcut><ComputerIcon />My Computer</Shortcut>
                <Shortcut><MyPalIcon />MyPal 68</Shortcut>
                <Shortcut><OutlookIcon />Microsoft Outlook</Shortcut>
            </ShortcutList>
            <BinSlot>
                <Shortcut><RecycleIcon />Recycle Bin</Shortcut>
            </BinSlot>
            <Explorer />
            <RegionalDialog />
        </Desktop>
        <TaskBar>
            <StartButton><FlagIcon size={19} />start</StartButton>
            <TaskButton><Icon size={15}><Raccoon /></Icon>Mypal</TaskButton>
            <TaskButton $pressed><PanelIcon />Control Panel</TaskButton>
            <Tray>
                <ShieldIcon />
                <EjectIcon />
                <FinderIcon />
                <Clock>2:38 AM</Clock>
            </Tray>
        </TaskBar>
    </Screen>
);

export default App;
